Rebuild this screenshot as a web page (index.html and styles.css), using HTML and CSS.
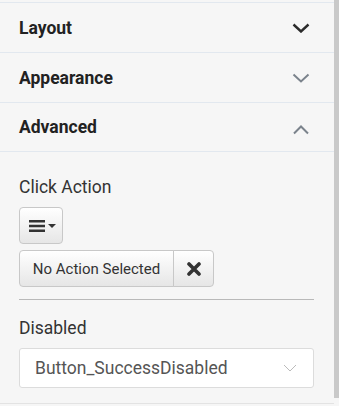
FILE: index.html
```html
<!DOCTYPE html>
<html>
<head>
    <meta charset="UTF-8">
    <title>Properties</title>
    <link rel="stylesheet" href="styles.css">
</head>
<body>
    <div class="frame">
        <div class="panel">
            <div class="section">
                <span class="section-title">Layout</span>
                <svg class="chevron dark" width="18" height="10" viewBox="0 0 18 10"><path d="M1.5 1.5 L9 8.5 L16.5 1.5" fill="none" stroke="currentColor" stroke-width="2.4"/></svg>
            </div>
            <div class="section">
                <span class="section-title">Appearance</span>
                <svg class="chevron" width="18" height="10" viewBox="0 0 18 10"><path d="M1.5 1.5 L9 8.5 L16.5 1.5" fill="none" stroke="currentColor" stroke-width="2"/></svg>
            </div>
            <div class="section">
                <span class="section-title">Advanced</span>
                <svg class="chevron up" width="18" height="10" viewBox="0 0 18 10"><path d="M2 8.5 L9 1.5 L16 8.5" fill="none" stroke="currentColor" stroke-width="2"/></svg>
            </div>
            <div class="body">
                <div class="field-label">Click Action</div>
                <button class="btn menu-btn">
                    <svg width="16" height="12" viewBox="0 0 16 12"><rect x="0" y="0" width="16" height="2.5" fill="#333"/><rect x="0" y="4.75" width="16" height="2.5" fill="#333"/><rect x="0" y="9.5" width="16" height="2.5" fill="#333"/></svg>
                    <span class="caret"></span>
                </button>
                <div class="btn-group">
                    <button class="btn action-btn">No Action Selected</button>
                    <button class="btn clear-btn">
                        <svg width="14" height="14" viewBox="0 0 14 14"><path d="M2 2 L12 12 M12 2 L2 12" stroke="#333" stroke-width="3.6" stroke-linecap="round"/></svg>
                    </button>
                </div>
                <hr class="divider">
                <div class="field-label">Disabled</div>
                <div class="select">
                    <span>Button_SuccessDisabled</span>
                    <svg width="14" height="8" viewBox="0 0 14 8"><path d="M1 1 L7 7 L13 1" fill="none" stroke="#bbb" stroke-width="1"/></svg>
                </div>
            </div>
        </div>
        <div class="scrollbar"></div>
    </div>
</body>
</html>
```

FILE: styles.css
```css
* {
    margin: 0;
    padding: 0;
    box-sizing: border-box;
}

body {
    background-color: #f6f6f6;
    font-family: 'Roboto', 'Liberation Sans', sans-serif;
    color: #333;
    width: 339px;
    height: 406px;
    overflow: hidden;
}

.frame {
    display: flex;
    height: 406px;
}

.panel {
    width: 334px;
    padding-top: 2px;
    border-bottom: 1px solid #e3e3e3;
    height: 404px;
}

.scrollbar {
    width: 5px;
    height: 398px;
    background-color: #c9c9c9;
}

.section {
    display: flex;
    align-items: center;
    justify-content: space-between;
    height: 50px;
    padding: 0 24px 0 19px;
    border-top: 1px solid #e2e8ef;
}

.section:nth-child(3) {
    border-bottom: 1px solid #e2e8ef;
}

.section-title {
    font-size: 17.5px;
    font-weight: 700;
    color: #222;
}

.chevron {
    color: #7b838c;
}

.chevron.dark {
    color: #2b2b2b;
}

.chevron.up {
    margin-top: 6px;
}

.body {
    padding: 25px 20px 0 19px;
}

.field-label {
    font-size: 17.5px;
    color: #333;
    line-height: 21px;
}

.btn {
    display: flex;
    align-items: center;
    justify-content: center;
    font-family: 'Roboto', 'Liberation Sans', sans-serif;
    font-size: 15px;
    color: #333;
    background: linear-gradient(#ffffff, #e6e6e6);
    border: 1px solid #c8c8c8;
    border-radius: 4px;
}

.menu-btn {
    margin-top: 9px;
    width: 44px;
    height: 37px;
    gap: 3px;
    padding-left: 2px;
}

.caret {
    width: 0;
    height: 0;
    border-left: 4px solid transparent;
    border-right: 4px solid transparent;
    border-top: 4px solid #333;
}

.btn-group {
    display: flex;
    margin-top: 6px;
}

.action-btn {
    width: 155px;
    height: 37px;
    border-radius: 4px 0 0 4px;
}

.clear-btn {
    width: 41px;
    height: 37px;
    margin-left: -1px;
    border-radius: 0 4px 4px 0;
}

.divider {
    border: none;
    border-top: 1px solid #b9b9b9;
    margin: 12px 0 18px;
}

.select {
    display: flex;
    align-items: center;
    justify-content: space-between;
    margin-top: 9px;
    height: 40px;
    padding: 0 16px 0 15px;
    background-color: #fff;
    border: 1px solid #dcdcdc;
    border-radius: 3px;
    font-size: 17.5px;
    color: #555;
}
```
